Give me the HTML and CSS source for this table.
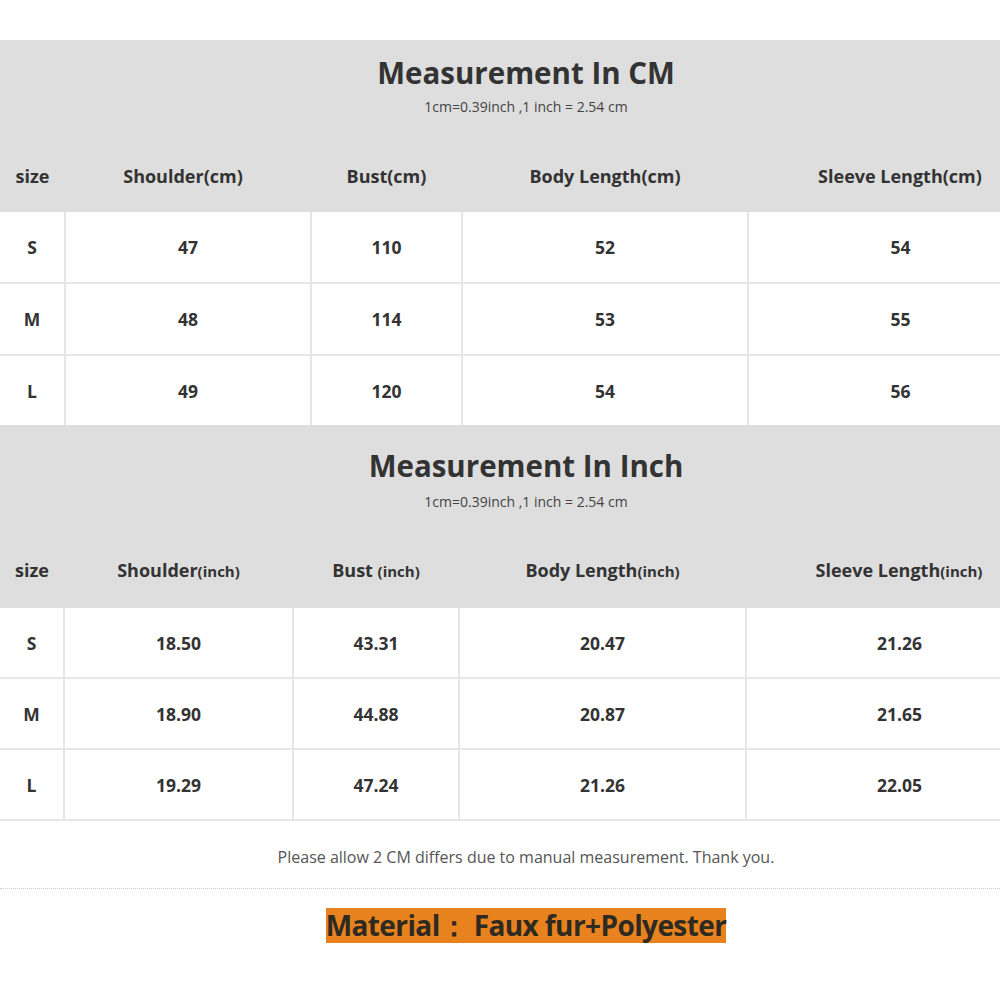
FILE: index.html
```html
<!DOCTYPE html>
<html>
<head>
<meta charset="utf-8">
<link rel="stylesheet" href="styles.css">
</head>
<body>
<div class="page">
  <table class="chart chart-cm">
    <colgroup><col class="c1"><col class="c2"><col class="c3"><col class="c4"><col class="c5"></colgroup>
    <thead>
      <tr class="title-row"><th colspan="5"><div class="title-wrap"><div class="title">Measurement In CM</div><div class="sub">1cm=0.39inch ,1 inch = 2.54 cm</div></div></th></tr>
      <tr class="head-row"><th>size</th><th class="sh">Shoulder(cm)</th><th>Bust(cm)</th><th>Body Length(cm)</th><th class="end">Sleeve Length(cm)</th></tr>
    </thead>
    <tbody>
      <tr><td>S</td><td>47</td><td>110</td><td>52</td><td class="end">54</td></tr>
      <tr><td>M</td><td>48</td><td>114</td><td>53</td><td class="end">55</td></tr>
      <tr class="last"><td>L</td><td>49</td><td>120</td><td>54</td><td class="end">56</td></tr>
    </tbody>
  </table>
  <table class="chart chart-in">
    <colgroup><col class="c1"><col class="c2"><col class="c3"><col class="c4"><col class="c5"></colgroup>
    <thead>
      <tr class="title-row"><th colspan="5"><div class="title-wrap"><div class="title">Measurement In Inch</div><div class="sub">1cm=0.39inch ,1 inch = 2.54 cm</div></div></th></tr>
      <tr class="head-row"><th>size</th><th>Shoulder<span class="u">(inch)</span></th><th>Bust <span class="u">(inch)</span></th><th>Body Length<span class="u">(inch)</span></th><th class="end">Sleeve Length<span class="u">(inch)</span></th></tr>
    </thead>
    <tbody>
      <tr><td>S</td><td>18.50</td><td>43.31</td><td>20.47</td><td class="end">21.26</td></tr>
      <tr><td>M</td><td>18.90</td><td>44.88</td><td>20.87</td><td class="end">21.65</td></tr>
      <tr><td>L</td><td>19.29</td><td>47.24</td><td>21.26</td><td class="end">22.05</td></tr>
    </tbody>
  </table>
  <p class="note">Please allow 2 CM differs due to manual measurement. Thank you.</p>
  <div class="material-wrap"><span class="material">Material：&nbsp;Faux fur+Polyester</span></div>
</div>
</body>
</html>
```
FILE: styles.css
```css
html, body {
  margin: 0;
  padding: 0;
  background: #ffffff;
}
body {
  font-family: "Open Sans", "Noto Sans", sans-serif;
  color: #333333;
}
.page {
  width: 1000px;
  padding-top: 40px;
}
.chart {
  width: 1000px;
  border-collapse: collapse;
  table-layout: fixed;
}
.chart-cm .c1 { width: 65px; }
.chart-cm .c2 { width: 246px; }
.chart-cm .c3 { width: 151px; }
.chart-cm .c4 { width: 286px; }
.chart-cm .c5 { width: 252px; }
.chart-in .c1 { width: 64px; }
.chart-in .c2 { width: 229px; }
.chart-in .c3 { width: 166px; }
.chart-in .c4 { width: 287px; }
.chart-in .c5 { width: 254px; }
thead { background: #dedede; }
.title-row th {
  padding: 0;
  font-weight: normal;
}
.title-wrap {
  height: 100px;
  display: flex;
  flex-direction: column;
  align-items: center;
  box-sizing: border-box;
  padding-top: 14px;
  padding-left: 52px;
}
.chart-in .title-wrap {
  height: 109px;
  padding-top: 22px;
}
.title {
  font-size: 29.5px;
  font-weight: 700;
  line-height: 38px;
  color: #333;
}
.sub {
  font-size: 14px;
  line-height: 18px;
  margin-top: 6px;
  color: #444;
}
.chart-in .sub { margin-top: 8px; }
.head-row th {
  height: 72px;
  padding: 0;
  font-size: 18px;
  font-weight: 700;
  text-align: center;
  color: #333;
}
.chart-in .head-row th { height: 71px; padding-bottom: 3px; }
.chart-cm .head-row .sh { padding-right: 10px; }
.head-row .u { font-size: 15px; }
.head-row th.end { padding-left: 52px; }
td {
  height: 70px;
  padding: 0;
  text-align: center;
  font-size: 17.5px;
  font-weight: 700;
  color: #333;
  border-right: 2px solid #e6e6e6;
  border-bottom: 2px solid #e6e6e6;
}
td.end {
  border-right: none;
  padding-left: 52px;
}
.chart-in td { height: 69px; }
.chart-cm tr.last td { border-bottom: none; height: 69px; }
.note {
  margin: 0;
  padding-left: 52px;
  height: 67px;
  line-height: 72px;
  text-align: center;
  font-size: 16px;
  color: #555;
  border-bottom: 1px dotted #cfcfcf;
}
.material-wrap {
  text-align: center;
  padding-top: 19px;
  padding-left: 52px;
}
.material {
  display: inline-block;
  background: #e8821e;
  color: #2e2a22;
  font-size: 28px;
  font-weight: 700;
  line-height: 35px;
  letter-spacing: -0.6px;
}
```
